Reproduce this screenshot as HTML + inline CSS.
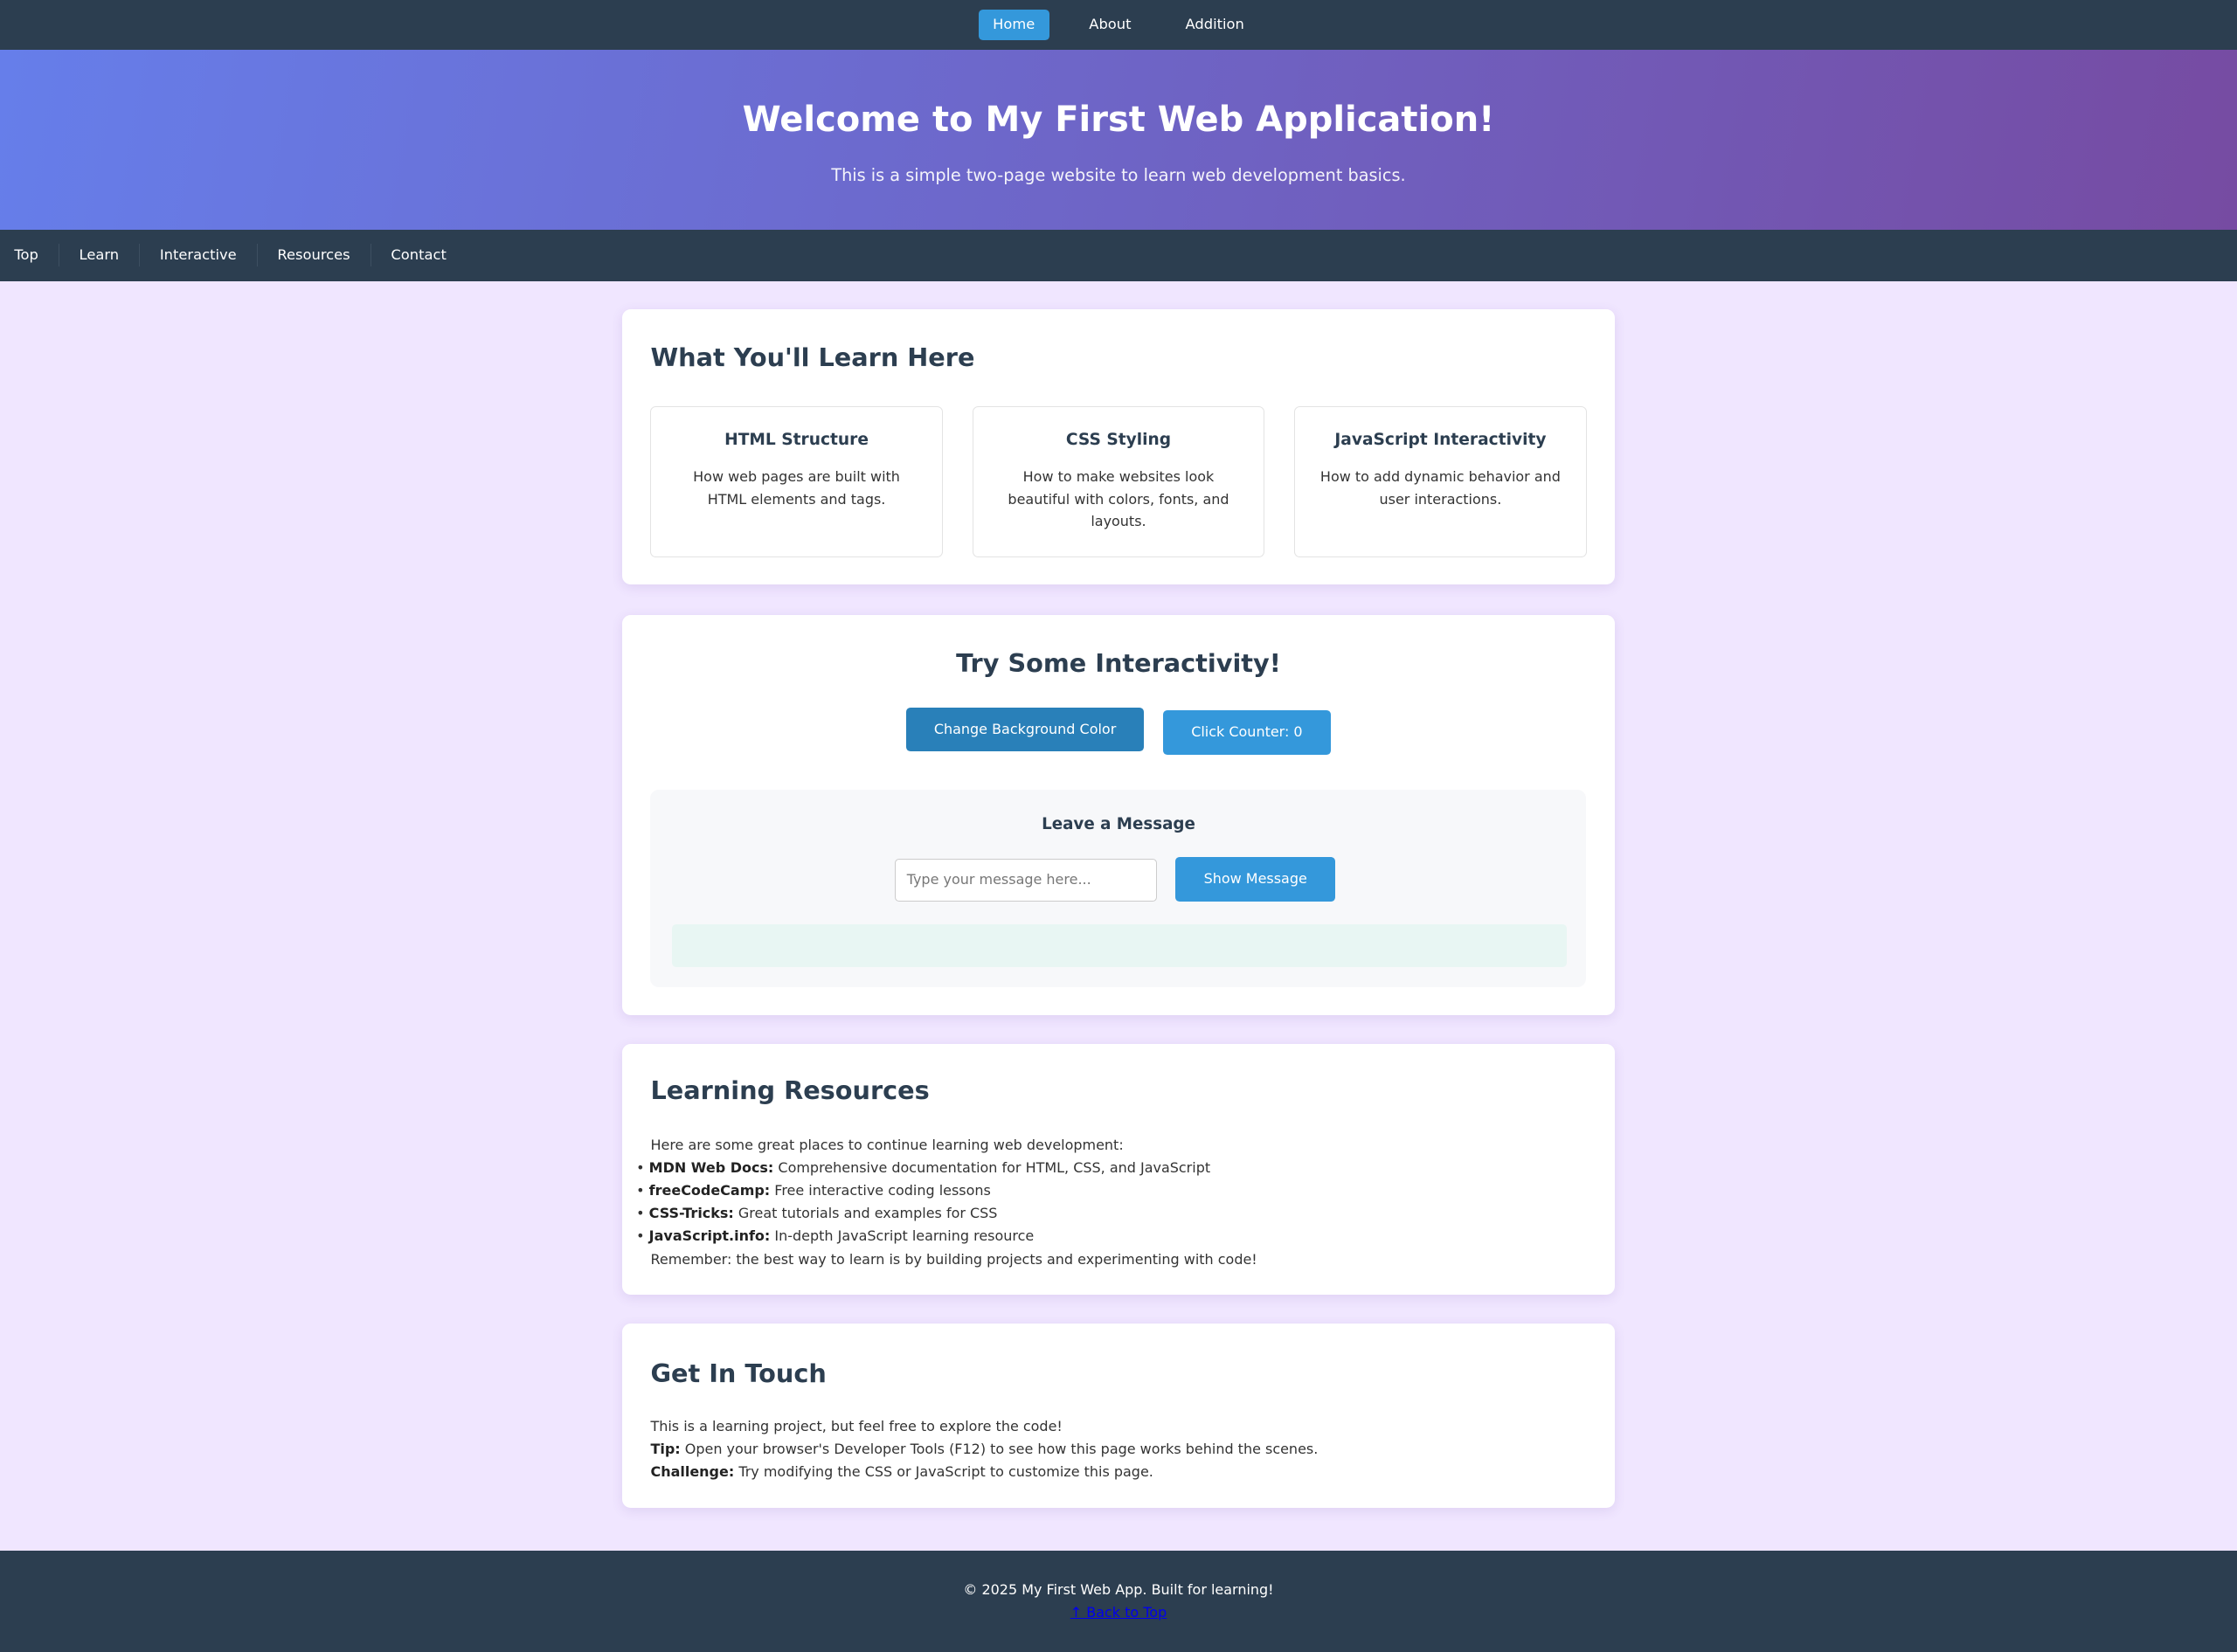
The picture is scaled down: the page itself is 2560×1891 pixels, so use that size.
<!DOCTYPE html>
<html><head><meta charset="utf-8"><style>
html{zoom:1.63265}
*{box-sizing:border-box;margin:0;padding:0}
body{width:1568px;height:1158px;overflow:hidden;font-family:"DejaVu Sans","Liberation Sans",sans-serif;background:#f0e6ff;color:#333;font-size:9.8px;line-height:16px}
.top{height:35px;background:#2c3e50;display:flex;justify-content:center;align-items:center;gap:0}
.top a{color:#fff;font-size:10px;text-decoration:none;padding:3px 10px;margin:0 9px;border-radius:3px;line-height:15px}
.top a.on{background:#3498db}
.hero{height:126px;background:linear-gradient(100deg,#667eea,#764ba2);color:#fff;text-align:center;padding-top:34px}
.hero h1{font-size:24.5px;line-height:30px;font-weight:bold}
.hero p{font-size:11.8px;margin-top:16px;opacity:.92}
.sub{height:36px;background:#2c3e50;display:flex;align-items:center;padding-left:10px}
.sub a{color:#fff;text-decoration:none;font-size:10px;padding:0 14px;border-left:1px solid #3d4f61;line-height:16px}
.sub a:first-child{padding-left:0;border:none}
.card{position:absolute;left:436px;width:696px;background:#fff;border-radius:6px;box-shadow:0 2px 8px rgba(100,60,160,.12);padding:20px}
h2{font-size:17.6px;line-height:24px;color:#2c3e50;font-weight:bold}
.grid{display:flex;gap:21px;margin-top:22px}
.f{flex:1;border:1px solid #e3e3e3;border-radius:4px;height:106px;text-align:center;padding:15px 14px}
.f h3{font-size:11.4px;color:#2c3e50;margin-bottom:10px}
.f p{font-size:9.8px;line-height:15.5px}
.btn{position:absolute;color:#fff;font-size:9.8px;text-align:center;border-radius:3px;background:#3498db}
b{color:#222}
</style></head><body>
<div class="top"><a class="on">Home</a><a>About</a><a>Addition</a></div>
<div class="hero"><h1>Welcome to My First Web Application!</h1><p>This is a simple two-page website to learn web development basics.</p></div>
<div class="sub"><a>Top</a><a>Learn</a><a>Interactive</a><a>Resources</a><a>Contact</a></div>

<div class="card" style="top:217px;height:193px">
<h2 style="margin-top:2px">What You'll Learn Here</h2>
<div class="grid">
<div class="f"><h3>HTML Structure</h3><p style="padding:0 12px">How web pages are built with HTML elements and tags.</p></div>
<div class="f"><h3>CSS Styling</h3><p style="padding:0 6px">How to make websites look beautiful with colors, fonts, and layouts.</p></div>
<div class="f"><h3>JavaScript Interactivity</h3><p>How to add dynamic behavior and user interactions.</p></div>
</div></div>

<div class="card" style="top:431px;height:281px">
<h2 style="text-align:center;margin-top:2px">Try Some Interactivity!</h2>
<div class="btn" style="left:199px;top:65px;width:167px;height:31px;line-height:31px;background:#2980b9">Change Background Color</div>
<div class="btn" style="left:379px;top:67px;width:118px;height:31px;line-height:31px">Click Counter: 0</div>
<div style="position:absolute;left:20px;top:123px;width:656px;height:138px;background:#f7f8fa;border-radius:6px">
<div style="text-align:center;font-weight:bold;color:#2c3e50;font-size:11.2px;margin-top:16px">Leave a Message</div>
<div style="position:absolute;left:171px;top:48px;width:184px;height:30px;border:1px solid #ccc;border-radius:3px;background:#fff;color:#777;padding-left:8px;line-height:28px;font-size:9.8px">Type your message here...</div>
<div class="btn" style="left:368px;top:47px;width:112px;height:31px;line-height:31px">Show Message</div>
<div style="position:absolute;left:15px;top:94px;width:627px;height:30px;background:#e8f6f3;border-radius:3px"></div>
</div></div>

<div class="card" style="top:732px;height:176px">
<h2 style="margin-top:1px">Learning Resources</h2>
<div style="margin-top:18px">Here are some great places to continue learning web development:</div>
<ul style="list-style:none">
<li>• <b>MDN Web Docs:</b> Comprehensive documentation for HTML, CSS, and JavaScript</li>
<li>• <b>freeCodeCamp:</b> Free interactive coding lessons</li>
<li>• <b>CSS-Tricks:</b> Great tutorials and examples for CSS</li>
<li>• <b>JavaScript.info:</b> In-depth JavaScript learning resource</li>
</ul>
<div>Remember: the best way to learn is by building projects and experimenting with code!</div>
</div>
<style>.card ul li{margin-left:-10px}</style>

<div class="card" style="top:928px;height:129px">
<h2 style="margin-top:3px">Get In Touch</h2>
<div style="margin-top:17px">This is a learning project, but feel free to explore the code!</div>
<div><b>Tip:</b> Open your browser's Developer Tools (F12) to see how this page works behind the scenes.</div>
<div><b>Challenge:</b> Try modifying the CSS or JavaScript to customize this page.</div>
</div>

<div style="position:absolute;top:1087px;left:0;width:1568px;height:71px;background:#2c3e50;color:#fff;text-align:center;padding-top:20px">
<div>© 2025 My First Web App. Built for learning!</div>
<div><a style="color:#00e;text-decoration:underline">↑ Back to Top</a></div>
</div>
</body></html>
